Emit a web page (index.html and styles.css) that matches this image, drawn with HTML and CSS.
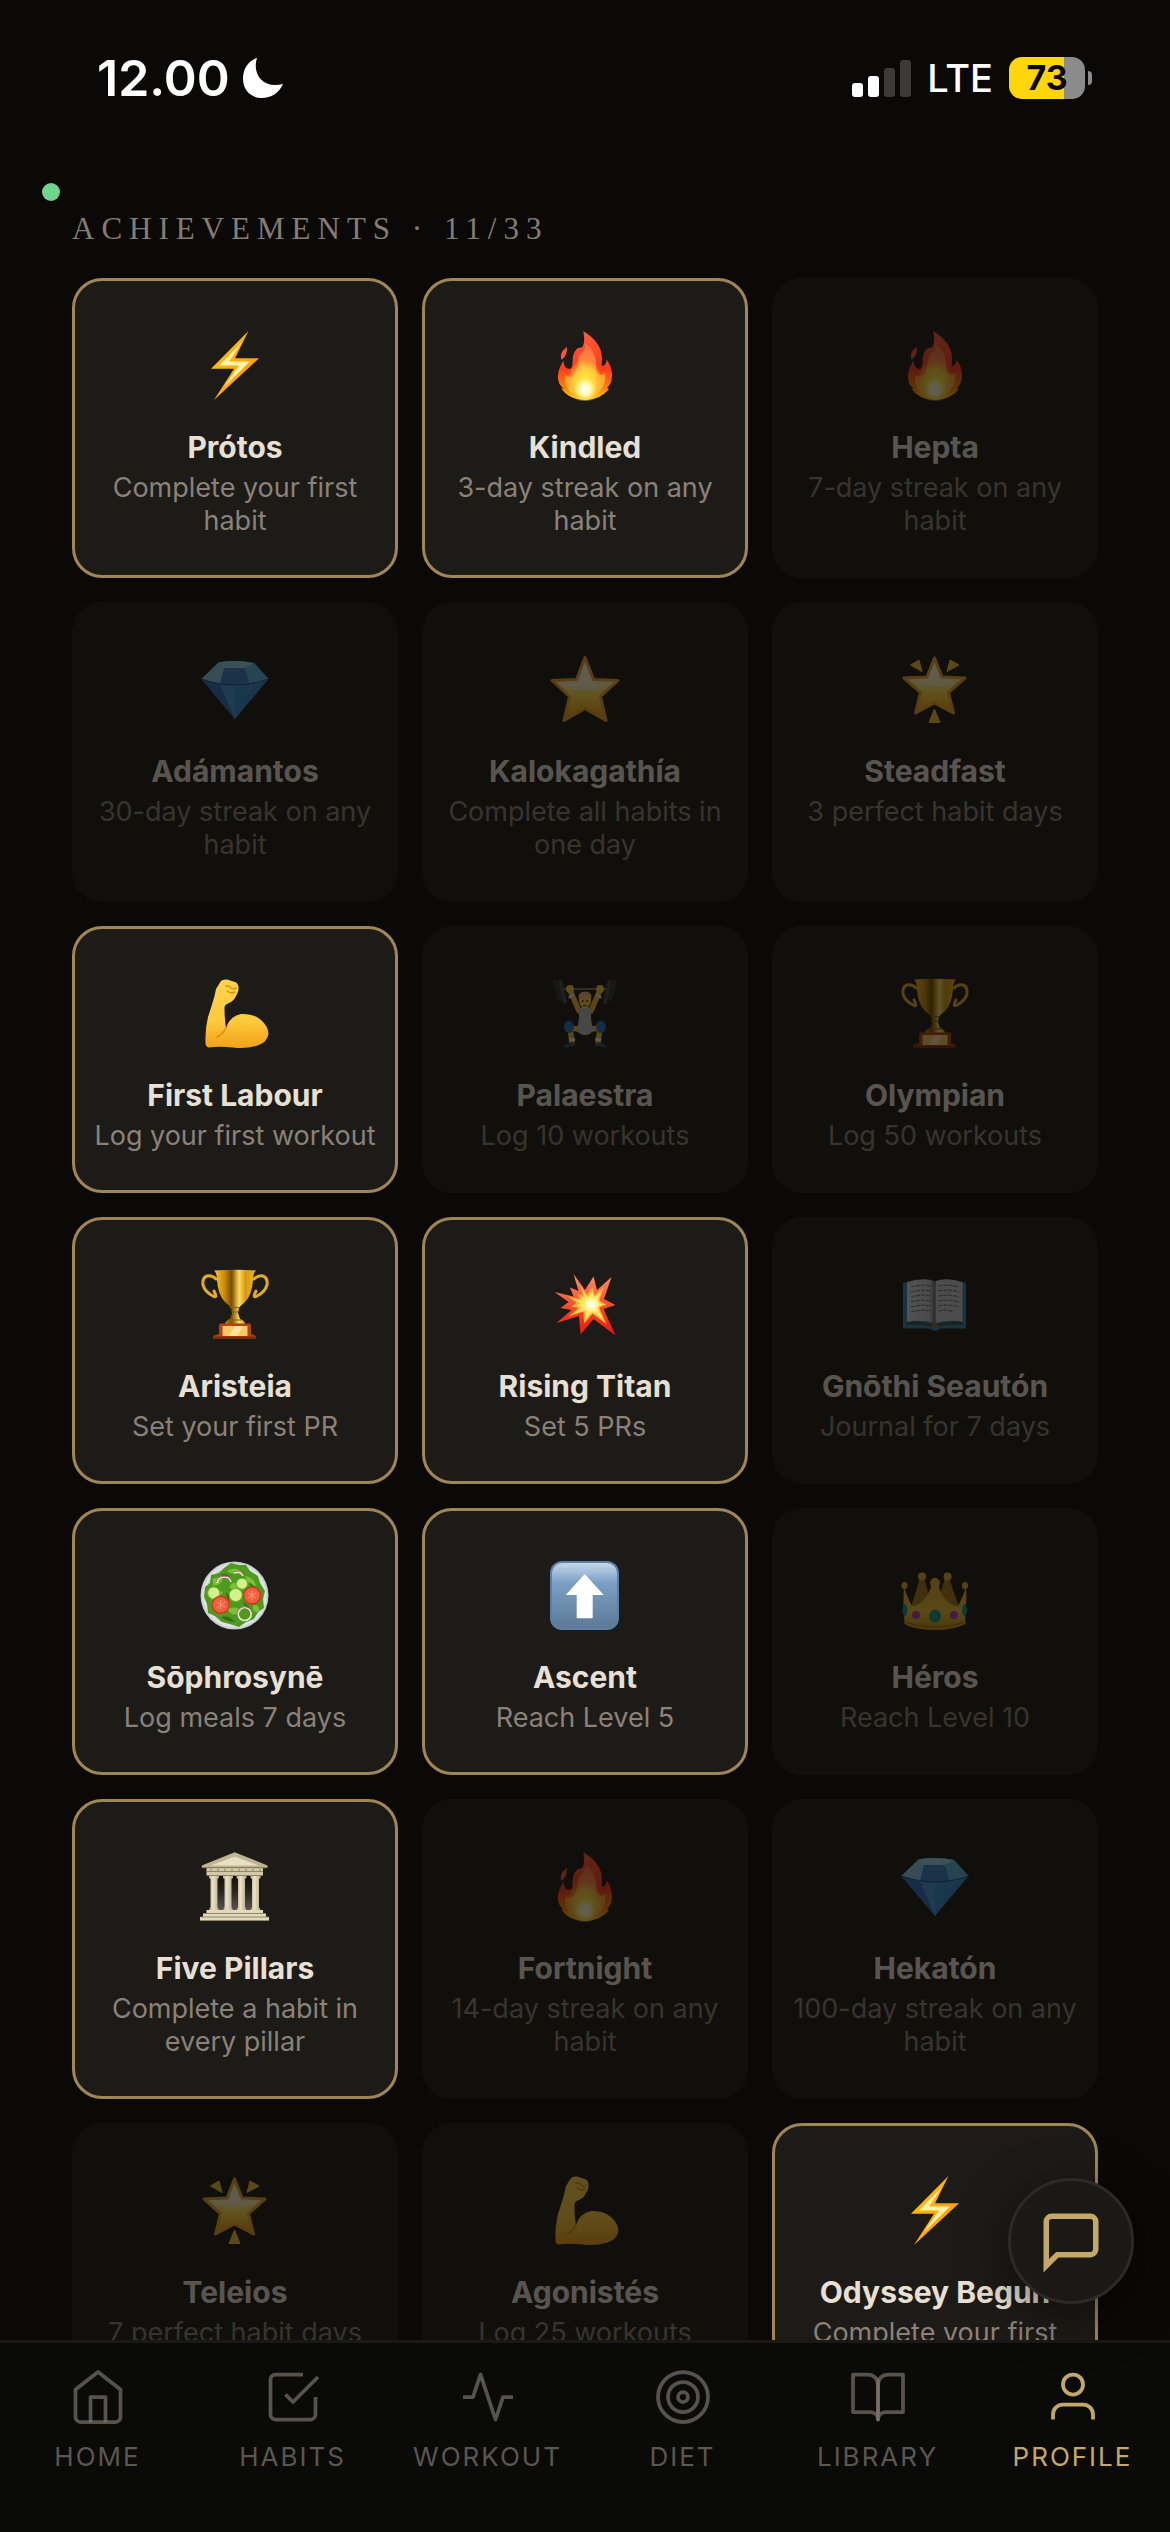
FILE: index.html
```html
<!DOCTYPE html>
<html lang="en">
<head>
  <meta charset="utf-8">
  <title>Achievements</title>
  <meta name="viewport" content="width=device-width, initial-scale=1.0">
  <link rel="stylesheet" href="styles.css">
</head>
<body>
  <!-- icon sprite -->
  <svg class="sprite" aria-hidden="true">
    <defs>
      <linearGradient id="g-bolt" x1="0" y1="0" x2="1" y2="1">
        <stop offset="0" stop-color="#ffc21a"/><stop offset="1" stop-color="#ff9500"/>
      </linearGradient>
      <linearGradient id="g-fire" x1="0" y1="0" x2="0" y2="1">
        <stop offset="0" stop-color="#ff5a3c"/><stop offset=".55" stop-color="#ff3d1c"/><stop offset=".85" stop-color="#ff8a00"/><stop offset="1" stop-color="#ffd23a"/>
      </linearGradient>
      <linearGradient id="g-flame" x1="0" y1="0" x2="0" y2="1">
        <stop offset="0" stop-color="#ff6f45"/><stop offset=".45" stop-color="#ff8f3a"/><stop offset="1" stop-color="#ffc92e"/>
      </linearGradient>
      <radialGradient id="g-glow">
        <stop offset="0" stop-color="#ffee3c"/><stop offset=".6" stop-color="#ffd83c" stop-opacity=".8"/><stop offset="1" stop-color="#ffb43c" stop-opacity="0"/>
      </radialGradient>
      <radialGradient id="g-core">
        <stop offset="0" stop-color="#ffffff"/><stop offset=".5" stop-color="#fff9b0"/><stop offset="1" stop-color="#ffe92e" stop-opacity="0"/>
      </radialGradient>
      <linearGradient id="g-gem" x1="0" y1="0" x2="1" y2="1">
        <stop offset="0" stop-color="#6fc6ea"/><stop offset="1" stop-color="#2463b8"/>
      </linearGradient>
      <linearGradient id="g-star" x1="0" y1="0" x2="0" y2="1">
        <stop offset="0" stop-color="#ffe9ae"/><stop offset=".35" stop-color="#fff3d0"/><stop offset=".6" stop-color="#ffdf48"/><stop offset="1" stop-color="#f0930c"/>
      </linearGradient>
      <linearGradient id="g-arm" x1="0" y1="0" x2="0" y2="1">
        <stop offset="0" stop-color="#ffd34d"/><stop offset=".6" stop-color="#ffca3e"/><stop offset="1" stop-color="#f2a116"/>
      </linearGradient>
      <linearGradient id="g-cup" x1="0" y1="0" x2="1" y2="0">
        <stop offset="0" stop-color="#ffc933"/><stop offset=".25" stop-color="#c98a0a"/><stop offset=".42" stop-color="#7a4c00"/><stop offset=".6" stop-color="#ffdc5c"/><stop offset=".75" stop-color="#d59a12"/><stop offset="1" stop-color="#f3b81f"/>
      </linearGradient>
      <linearGradient id="g-boom" x1="0" y1="0" x2="0" y2="1">
        <stop offset="0" stop-color="#ff8d68"/><stop offset=".4" stop-color="#fb5a3b"/><stop offset="1" stop-color="#ea120c"/>
      </linearGradient>
      <linearGradient id="g-page" x1="0" y1="0" x2="1" y2="0">
        <stop offset="0" stop-color="#dcdcde"/><stop offset=".8" stop-color="#c4c4c8"/><stop offset="1" stop-color="#77777c"/>
      </linearGradient>
      <linearGradient id="g-key" x1="0" y1="0" x2="0" y2="1">
        <stop offset="0" stop-color="#c3d6e8"/><stop offset=".12" stop-color="#a9c3dc"/><stop offset=".3" stop-color="#7b9fc4"/><stop offset="1" stop-color="#5d7a96"/>
      </linearGradient>
      <radialGradient id="g-plate">
        <stop offset=".78" stop-color="#b9c0c0"/><stop offset=".9" stop-color="#e3e7e7"/><stop offset="1" stop-color="#bcc2c3"/>
      </radialGradient>
      <linearGradient id="g-crown" x1="0" y1="0" x2="0" y2="1">
        <stop offset="0" stop-color="#dba92a"/><stop offset=".6" stop-color="#f0c236"/><stop offset="1" stop-color="#c2891a"/>
      </linearGradient>
      <linearGradient id="g-column" x1="0" y1="0" x2="1" y2="0">
        <stop offset="0" stop-color="#b8ae90"/><stop offset=".4" stop-color="#ebe3c6"/><stop offset="1" stop-color="#b3a986"/>
      </linearGradient>
      <linearGradient id="g-hall" x1="0" y1="0" x2="0" y2="1">
        <stop offset="0" stop-color="#120d04"/><stop offset=".5" stop-color="#2a2622"/><stop offset="1" stop-color="#5c5856"/>
      </linearGradient>
    </defs>

    <symbol id="bolt" viewBox="0 0 72 72">
      <path fill="url(#g-bolt)" d="M49.400 2L36 29.300H60L15 71L35 39.700H12Z"/>
      <path fill="#fff3a8" d="M43 13L30 32.500H51L25 58L40 36.500H20Z"/>
    </symbol>

    <symbol id="fire" viewBox="0 0 72 72">
      <path fill="#ff5238" d="M18 18C12 22 11 26 12.500 31C17 27 18 24 18 18Z"/>
      <path fill="url(#g-fire)" d="M34.300 2C44 8 53 17 53 29C53 33 52 36 53.500 37C56 37 57.500 34 57.500 30.500C61 35 63.500 41 63 48C62.500 53 61 56 58 59L60 60C54 67 46 71 36 71C26 71 17 67 12 59L15 60C10 56 8.500 51 9 46C9.500 40 12 36 14.500 31.500C14.500 37 17 40 21 40C26 38 21 28 27 21C29 17.500 32 20 34 17C36 12 35 7 34.300 2Z"/>
      <path fill="url(#g-flame)" d="M36 14C45 21 48 30 47 41C49 46 53 47 56 44C58 56 49 69 36 69C23 69 13 57 17 46C20 49 24 48 27 44C30 38 27 32 31 26C34 22 37 21 36 14Z"/>
      <ellipse fill="url(#g-glow)" cx="36" cy="52" rx="18" ry="22"/>
      <ellipse fill="url(#g-core)" cx="36" cy="60" rx="12" ry="13"/>
    </symbol>

    <symbol id="gem" viewBox="0 0 72 72">
      <path fill="url(#g-gem)" d="M19.500 9.500Q37 6.500 55 10L69.500 26L36 66L2.500 26Z"/>
      <path fill="#8fc9e8" d="M19.500 9.500L25 15L21 31Q10 29 2.500 26Z"/>
      <path fill="#3f7fc0" d="M25 15H46L51 32Q36 34 21 31Z"/>
      <path fill="#9ad3ee" d="M19.500 9.500Q37 6.500 55 10L46 15H25Z"/>
      <path fill="#5fb4dc" d="M55 10L69.500 26L51 32L46 15Z"/>
      <path fill="#2f6fbc" d="M2.500 26Q12 30 21 31L36 66Z"/>
      <path fill="#4a9ad6" d="M21 31Q36 34 51 32L36 66Z"/>
      <path fill="#2f8fc8" d="M36 34L51 32L36 66Z"/>
      <path fill="none" stroke="#24508f" stroke-width="1.200" d="M2.500 26Q36 38 69.500 26"/>
    </symbol>

    <symbol id="star" viewBox="0 0 72 72">
      <path fill="url(#g-star)" stroke="#e8a12a" stroke-width="3" stroke-linejoin="round" d="M36 4.500L44.500 26.500L69 27.500L51.500 43.500L57 67.500L36 55.500L15 67.500L20.500 43.500L3 27.500L27.500 26.500Z"/>
      <path fill="#fff5d8" opacity=".6" d="M36 12L42 30L58 31Q36 44 14 31L30 30Z"/>
    </symbol>

    <symbol id="glowstar" viewBox="0 0 72 72">
      <path fill="url(#g-star)" stroke="#e8a12a" stroke-width="3" stroke-linejoin="round" d="M35.500 5L43 24L66 25L49.500 39.500L54.500 60L35.500 50L16.500 60L21.500 39.500L5 25L28 24Z"/>
      <path fill="#fff5d8" opacity=".5" d="M36 12L41 27L56 28Q36 39 15 28L30 27Z"/>
      <path fill="#f3bf3a" stroke="#f3bf3a" stroke-linejoin="round" d="M11.500 12L20 7L23 18.500ZM60 12L51 7L48 18.500ZM35.500 56L41 69.500H30Z"/>
    </symbol>

    <symbol id="muscle" viewBox="0 0 72 72">
      <path fill="url(#g-arm)" d="M17 12L22 4Q24 2 28 2.500L36 5Q39 6 39.500 10Q40 15 37 19Q35 24 30 26Q25 28 25.500 31Q25.500 43 27 51Q31 39 42 37Q54 36 62 43Q69 49 69.500 57Q68 66 57 69Q46 72 34 70.500Q20 69 10 70.500Q6 70 6.500 65Q6 52 9 40Q13 28 15.500 19Z"/>
      <path fill="none" stroke="#d98d12" stroke-width="1.500" stroke-linecap="round" d="M27 51Q24 57 18 60M27 9Q30 8 32 11Q35 13 37 11M28 14Q32 17 36 15"/>
    </symbol>

    <symbol id="lifter" viewBox="0 0 72 72">
      <path fill="none" stroke="#8a8f98" stroke-width="1.500" d="M15 12H57"/>
      <path stroke="#303236" stroke-width="5" stroke-linecap="round" d="M6.500 5L11 22M65.500 5L61 22"/>
      <path stroke="#484a50" stroke-width="4" stroke-linecap="round" d="M11.500 5L16 25M60.500 5L56 25"/>
      <path fill="none" stroke="#f3b52c" stroke-width="5.500" stroke-linecap="round" stroke-linejoin="round" d="M21 13L30 34M51 13L42 34M29 52L21 51L23 66M43 52L51 51L49 66"/>
      <circle fill="#ffc93c" cx="21" cy="12" r="4"/><circle fill="#ffc93c" cx="51" cy="12" r="4"/>
      <path stroke="#e9e9ee" stroke-width="6" d="M21.500 18L23 20M50.500 18L49 20M23 61V64M49 61V64"/>
      <path fill="#b9bac0" d="M30 33L33 30H39L42 33V42L44 53Q42 58 36 58Q30 58 28 53L30 42Z"/>
      <ellipse fill="#ffc93c" cx="36" cy="23" rx="6" ry="8"/>
      <path fill="#e0b978" d="M29.500 21Q29 14.500 36 14.500Q43 14.500 42.500 21Q37 17 29.500 21Z"/>
      <path fill="#4a3410" d="M33 23h1.500v2H33ZM37.500 23H39v2H37.500ZM34 28h4v1H34Z"/>
      <ellipse fill="#2d6db8" cx="20" cy="50" rx="5" ry="6"/><ellipse fill="#2d6db8" cx="52" cy="50" rx="5" ry="6"/>
      <path fill="#2c4d78" d="M14 70Q18 65 25 65.500L26 67L19 70.500ZM58 70Q54 65 47 65.500L46 67L53 70.500Z"/>
    </symbol>

    <symbol id="trophy" viewBox="0 0 72 72">
      <path fill="none" stroke="#e3ab28" stroke-width="3" stroke-linecap="round" d="M17 11Q13 7 8 8Q3 10 4 17Q6 24 14 28Q19 31 15 23M55 11Q59 7 64 8Q69 10 68 17Q66 24 58 28Q53 31 57 23"/>
      <path fill="url(#g-cup)" d="M15 2.500Q36 1 57 2.500Q54 5 54 12Q53 27 46 34Q41 38 40 40L39 45L41 51Q46 53 46 56H26Q26 53 31 51L33 45L32 40Q31 38 26 34Q19 27 18 12Q18 5 15 2.500Z"/>
      <path fill="none" stroke="#8d5c05" stroke-width="1.200" d="M31 39.500H41M32.500 44H39.500M29 52H43"/>
      <path fill="#b0440f" d="M21 55.500H51Q52 56 52 58V66L57 68V71H14V68L20 66V58Q20 56 21 55.500Z"/>
      <path fill="#7e2a07" d="M14 68.500H57V71H14Z"/>
      <path fill="#f7c864" d="M23.500 58H48.500V68H23.500Z"/>
      <path fill="#ffe4a0" d="M36 58H44L38 68H30Z"/>
    </symbol>

    <symbol id="boom" viewBox="0 0 72 72">
      <path fill="url(#g-boom)" d="M24.500 6L36 22L44.500 8.500L48 22L62.500 9L55 31L66.500 37L54.500 41L66.500 67.500L44.500 51L31.500 66.500L30 48L7.500 55L22.500 42L11.500 40L19.500 34L5.500 24L24.500 28.500L21 19.500L29.500 23Z"/>
      <path fill="#ffb52e" transform="translate(15 13) scale(.64)" d="M24.500 6L36 22L44.500 8.500L48 22L62.500 9L55 31L66.500 37L54.500 41L66.500 67.500L44.500 51L31.500 66.500L30 48L7.500 55L22.500 42L11.500 40L19.500 34L5.500 24L24.500 28.500L21 19.500L29.500 23Z"/>
      <path fill="#ffe36a" transform="translate(22 19) scale(.48)" d="M24.500 6L36 22L44.500 8.500L48 22L62.500 9L55 31L66.500 37L54.500 41L66.500 67.500L44.500 51L31.500 66.500L30 48L7.500 55L22.500 42L11.500 40L19.500 34L5.500 24L24.500 28.500L21 19.500L29.500 23Z"/>
      <circle fill="url(#g-core)" cx="42.500" cy="36.500" r="10"/>
    </symbol>

    <symbol id="book" viewBox="0 0 72 72">
      <path fill="#2f87ad" d="M4 14.500H67V60.500H41Q36 65 31 60.500H4Z"/>
      <path fill="#4a4a4e" d="M8 52L35.500 56L63 52L65 57Q48 55 36 60Q24 55 7 57Z"/>
      <path fill="url(#g-page)" d="M8 14Q24 9 35.500 13V55Q22 51 8 54Z"/>
      <path fill="#c9c9cd" d="M63.500 14Q48 9 36.500 13V55Q50 51 63.500 54Z"/>
      <path stroke="#6c6c70" stroke-width="1" d="M35.800 13V56"/>
      <path fill="none" stroke="#77777b" stroke-width="1.200" stroke-dasharray="4 1" d="M12 19Q22 16 32 18M12 24Q22 21 32 23M12 29Q22 26 32 28M12 34Q22 31 32 33M12 39Q22 36 32 38M12 44Q22 41 32 43M39 18Q50 16 60 19M39 23Q50 21 60 24M39 28Q50 26 60 29M39 33Q50 31 60 34M39 38Q50 36 60 39M39 43Q50 41 54 44"/>
      <path fill="#8a7330" d="M32 57Q36 55 40 57L38 60H34Z"/>
    </symbol>

    <symbol id="salad" viewBox="0 0 72 72">
      <circle fill="url(#g-plate)" cx="35.500" cy="36.500" r="34"/>
      <path fill="#4d9a1f" d="M25 9L32 4L40 6L47 6L51 12L59 17L61 24L66 32L64 40L65 49L59 53L55 60L47 63L40 68L31 65L23 63L16 57L9 54L8 45L5 38L6 28L11 24L12 16L20 14Z"/>
      <path fill="#79c236" d="M28 12Q36 7 43 13Q36 18 28 12ZM46 17Q55 18 57 27Q48 26 46 17ZM12 41Q22 38 24 33Q16 30 12 41ZM28 50Q38 46 42 52Q34 60 28 50ZM30 28Q36 20 40 27Q36 34 30 28ZM54 46Q61 45 60 52Q53 55 54 46ZM14 20Q20 17 24 20Q20 28 14 26Z"/>
      <path fill="#2f7011" d="M44 43Q50 46 52 51Q46 50 44 43ZM22 58Q30 56 36 63Q28 63 22 58ZM22 16Q26 13 30 17Q26 20 22 16ZM50 23Q56 28 59 30Q52 31 50 23ZM27 33Q31 36 30 42Q27 38 27 33Z"/>
      <g fill="#d7f08e" stroke="#6fb52e">
        <circle cx="14.700" cy="34" r="6"/><circle cx="36.700" cy="36" r="6.500"/><circle cx="43" cy="24.700" r="5.500"/>
      </g>
      <g fill="#ee6040" stroke="#d8331c" stroke-width="1.500">
        <circle cx="21.700" cy="45.700" r="8.500"/><circle cx="53" cy="36.500" r="8.500"/>
      </g>
      <path fill="none" stroke="#f99a7c" stroke-width="1" d="M21.700 41V50M17.500 43L26 48M17.500 49L26 43M53 32V41M49 34L57 39M49 39L57 34"/>
      <g fill="none" stroke="#f6e6ea" stroke-width="1.500">
        <circle cx="45.700" cy="55" r="6.500"/><path d="M18 24Q19 18 25 18Q31 18 32 23M35 14Q41 11 44 17"/>
      </g>
      <path fill="none" stroke="#d0568a" stroke-width="1" d="M38 55A7.700 7.700 0 0 1 53 53M17 23Q19 17 25 17Q31 17 33 22M35 13Q42 10 45 16"/>
    </symbol>

    <symbol id="up" viewBox="0 0 72 72">
      <rect fill="#5b7fa6" x="1" y="2" width="69" height="69" rx="12"/>
      <rect fill="url(#g-key)" x="3" y="4" width="65" height="65" rx="10"/>
      <path fill="#ffffff" d="M35.700 15L54.700 36H43.700V58.500Q43.700 59.300 43 59.300H28.500Q27.700 59.300 27.700 58.500V36H16.700Z"/>
    </symbol>

    <symbol id="crown" viewBox="0 0 72 72">
      <path fill="#a8761a" d="M12 48L21 19H25L33 46L38 46L46 19H50L60 48V60H12Z"/>
      <path fill="url(#g-crown)" d="M5 28Q9 40 13 47Q19 47 23 42Q30 36 32.500 26H39.500Q42 36 48 42Q52 47 59 47Q63 40 67 28Q68 42 66 53L66.500 65Q55 71 36 71Q16 71 5.500 65L5 53Q4 42 5 28Z"/>
      <g fill="#e3b02e">
        <ellipse cx="5.500" cy="26.500" rx="3" ry="3.500"/><circle cx="23" cy="17.500" r="4"/><circle cx="36" cy="24" r="5"/><circle cx="48.500" cy="17.500" r="4"/><ellipse cx="66" cy="26.500" rx="3" ry="3.500"/>
      </g>
      <path fill="none" stroke="#9a6b12" stroke-width="1.200" d="M7 63Q20 68 36 68Q52 68 65 63"/>
      <g fill="#159a80"><ellipse cx="36" cy="57" rx="6" ry="6.500"/><ellipse cx="6" cy="51" rx="2.500" ry="6"/><ellipse cx="65.500" cy="51" rx="2.500" ry="6"/></g>
      <circle fill="#b438b0" cx="17" cy="56" r="4"/><circle fill="#b438b0" cx="55" cy="56" r="4"/>
    </symbol>

    <symbol id="pillars" viewBox="0 0 72 72">
      <rect fill="url(#g-hall)" x="14" y="24" width="44" height="37"/>
      <path fill="#bfb593" d="M35.700 2.300L68.500 15.500V17.500H2.800V15.500Z"/>
      <path fill="#e8e0c2" d="M35.700 6.500L60 15.500H11.500Z"/>
      <path fill="#d3caa9" d="M7.500 18H64V25.500H7.500Z"/>
      <path stroke="#8f8665" stroke-width="1" d="M3 17.700H68.500M8 21.500H64M9 25.500H63"/>
      <path stroke="#a89f7f" stroke-width="2" stroke-dasharray="2 5" d="M11 19.700H62"/>
      <g fill="url(#g-column)">
        <path d="M10 26H20V28L18.500 29V57L20 60H10L11.500 57V29L10 28Z"/><path d="M24 26H34V28L32.500 29V57L34 60H24L25.500 57V29L24 28Z"/><path d="M37.500 26H47.500V28L46 29V57L47.500 60H37.500L39 57V29L37.500 28Z"/><path d="M51.500 26H61.500V28L60 29V57L61.500 60H51.500L53 57V29L51.500 28Z"/>
      </g>
      <path fill="#e2dabb" d="M7.500 60H64V63.500H67V67H70V71H1V67H4V63.500H7.500Z"/>
      <path stroke="#8f8665" stroke-width="1" d="M5 63.500H66.500M2 67H69.500M1 70.500H70"/>
    </symbol>
  </svg>

  <header class="status-bar">
    <div class="status-left">
      <span class="time">12.00</span>
      <svg class="moon" viewBox="0 0 42 42"><path d="M15 1C10 16 20 32 41 27C37 36 29 41 20 41C9 41 1 33 1 22C1 12 6 4 15 1Z"/></svg>
    </div>
    <div class="status-right">
      <svg class="signal" viewBox="0 0 59 38">
        <rect x="0" y="24" width="11" height="14" rx="3"/><rect x="16" y="17" width="11" height="21" rx="3"/>
        <rect class="off" x="32" y="9" width="11" height="29" rx="3"/><rect class="off" x="48" y="1" width="11" height="37" rx="3"/>
      </svg>
      <span class="network">LTE</span>
      <div class="battery"><span class="battery-level">73</span></div>
    </div>
  </header>

  <span class="live-dot"></span>

  <main class="content">
    <h2 class="section-title">ACHIEVEMENTS · 11/33</h2>
    <ul class="grid">
      <li class="card earned"><svg class="icon"><use href="#bolt"/></svg><h3>Prótos</h3><p>Complete your first habit</p></li>
      <li class="card earned"><svg class="icon"><use href="#fire"/></svg><h3>Kindled</h3><p>3-day streak on any habit</p></li>
      <li class="card"><svg class="icon"><use href="#fire"/></svg><h3>Hepta</h3><p>7-day streak on any habit</p></li>

      <li class="card"><svg class="icon"><use href="#gem"/></svg><h3>Adámantos</h3><p>30-day streak on any habit</p></li>
      <li class="card"><svg class="icon"><use href="#star"/></svg><h3>Kalokagathía</h3><p>Complete all habits in one day</p></li>
      <li class="card"><svg class="icon"><use href="#glowstar"/></svg><h3>Steadfast</h3><p>3 perfect habit days</p></li>

      <li class="card earned"><svg class="icon"><use href="#muscle"/></svg><h3>First Labour</h3><p>Log your first workout</p></li>
      <li class="card"><svg class="icon"><use href="#lifter"/></svg><h3>Palaestra</h3><p>Log 10 workouts</p></li>
      <li class="card"><svg class="icon"><use href="#trophy"/></svg><h3>Olympian</h3><p>Log 50 workouts</p></li>

      <li class="card earned"><svg class="icon"><use href="#trophy"/></svg><h3>Aristeia</h3><p>Set your first PR</p></li>
      <li class="card earned"><svg class="icon"><use href="#boom"/></svg><h3>Rising Titan</h3><p>Set 5 PRs</p></li>
      <li class="card"><svg class="icon"><use href="#book"/></svg><h3>Gnōthi Seautón</h3><p>Journal for 7 days</p></li>

      <li class="card earned"><svg class="icon"><use href="#salad"/></svg><h3>Sōphrosynē</h3><p>Log meals 7 days</p></li>
      <li class="card earned"><svg class="icon"><use href="#up"/></svg><h3>Ascent</h3><p>Reach Level 5</p></li>
      <li class="card"><svg class="icon"><use href="#crown"/></svg><h3>Héros</h3><p>Reach Level 10</p></li>

      <li class="card earned"><svg class="icon"><use href="#pillars"/></svg><h3>Five Pillars</h3><p>Complete a habit in every pillar</p></li>
      <li class="card"><svg class="icon"><use href="#fire"/></svg><h3>Fortnight</h3><p>14-day streak on any habit</p></li>
      <li class="card"><svg class="icon"><use href="#gem"/></svg><h3>Hekatón</h3><p>100-day streak on any habit</p></li>

      <li class="card"><svg class="icon"><use href="#glowstar"/></svg><h3>Teleios</h3><p>7 perfect habit days</p></li>
      <li class="card"><svg class="icon"><use href="#muscle"/></svg><h3>Agonistés</h3><p>Log 25 workouts</p></li>
      <li class="card earned"><svg class="icon"><use href="#bolt"/></svg><h3>Odyssey Begun</h3><p>Complete your first</p></li>
    </ul>
  </main>

  <button class="chat-button" type="button" aria-label="Chat">
    <svg viewBox="0 0 24 24"><path d="M21 15a2 2 0 0 1-2 2H7l-4 4V5a2 2 0 0 1 2-2h14a2 2 0 0 1 2 2z"/></svg>
  </button>

  <nav class="tab-bar">
    <a class="tab" href="#home">
      <svg viewBox="0 0 24 24"><path d="M3 9l9-7 9 7v11a2 2 0 0 1-2 2H5a2 2 0 0 1-2-2z"/><path d="M9 22V12h6v10"/></svg>
      <span>HOME</span>
    </a>
    <a class="tab" href="#habits">
      <svg viewBox="0 0 24 24"><path d="M9 11l3 3L22 4"/><path d="M21 12v7a2 2 0 0 1-2 2H5a2 2 0 0 1-2-2V5a2 2 0 0 1 2-2h11"/></svg>
      <span>HABITS</span>
    </a>
    <a class="tab" href="#workout">
      <svg viewBox="0 0 24 24"><path d="M22 12h-4l-3 9L9 3l-3 9H2"/></svg>
      <span>WORKOUT</span>
    </a>
    <a class="tab" href="#diet">
      <svg viewBox="0 0 24 24"><circle cx="12" cy="12" r="10"/><circle cx="12" cy="12" r="6"/><circle cx="12" cy="12" r="2"/></svg>
      <span>DIET</span>
    </a>
    <a class="tab" href="#library">
      <svg viewBox="0 0 24 24"><path d="M2 3h6a4 4 0 0 1 4 4v14a3 3 0 0 0-3-3H2z"/><path d="M22 3h-6a4 4 0 0 0-4 4v14a3 3 0 0 1 3-3h7z"/></svg>
      <span>LIBRARY</span>
    </a>
    <a class="tab active" href="#profile">
      <svg viewBox="0 0 24 24"><path d="M20 21v-2a4 4 0 0 0-4-4H8a4 4 0 0 0-4 4v2"/><circle cx="12" cy="7" r="4"/></svg>
      <span>PROFILE</span>
    </a>
  </nav>
</body>
</html>
```
FILE: styles.css
```css
* {
  box-sizing: border-box;
}
body {
  margin: 0;
  height: 100vh;
  display: flex;
  flex-direction: column;
  overflow: hidden;
  background-color: #0a0907;
  color: #e8e0d4;
  font-family: Inter, 'Liberation Sans', sans-serif;
}
.sprite {
  position: absolute;
  width: 0;
  height: 0;
}

/* status bar */
.status-bar {
  display: flex;
  justify-content: space-between;
  padding: 48px 78px 20px 97px;
  color: #ffffff;
}
.status-left, .status-right {
  display: flex;
  align-items: center;
  height: 60px;
}
.status-left {
  gap: 12px;
}
.status-right {
  gap: 16px;
}
.time {
  font-size: 50px;
  font-weight: 600;
  line-height: 60px;
}
.moon {
  width: 42px;
  height: 42px;
  fill: #ffffff;
}
.signal {
  width: 59px;
  height: 38px;
  fill: #ffffff;
}
.signal .off {
  fill: #3b3a39;
}
.network {
  font-size: 38px;
  font-weight: 500;
  line-height: 60px;
}
.battery {
  position: relative;
  width: 76px;
  height: 42px;
  margin-right: 7px;
  border-radius: 13px;
  background: linear-gradient(to right, #ffd60a 73%, #8b8b8b 73%);
  color: #0a0907;
  text-align: center;
}
.battery::after {
  content: "";
  position: absolute;
  left: 79px;
  top: 14px;
  width: 4px;
  height: 14px;
  border-radius: 0 4px 4px 0;
  background: #8b8b8b;
}
.battery-level {
  font-size: 34px;
  font-weight: 700;
  line-height: 42px;
}

.live-dot {
  position: fixed;
  top: 183px;
  left: 42px;
  width: 18px;
  height: 18px;
  border-radius: 50%;
  background-color: #70d58e;
}

/* achievements */
.content {
  flex: 1;
  min-height: 0;
  overflow: hidden;
  padding: 83px 72px 0;
}
.section-title {
  margin: 0 0 31px;
  font-family: 'Liberation Serif', serif;
  font-size: 31px;
  font-weight: 400;
  line-height: 36px;
  letter-spacing: 7px;
  color: #847d73;
}
.grid {
  display: grid;
  grid-template-columns: repeat(3, minmax(0, 1fr));
  gap: 24px;
  margin: 0;
  padding: 0;
  list-style: none;
}
.card {
  display: flex;
  flex-direction: column;
  align-items: center;
  padding: 48px 12px 38px;
  border: 3px solid #1c1b17;
  border-radius: 30px;
  background-color: #1c1b17;
  text-align: center;
  opacity: 0.35;
}
.card.earned {
  border-color: #a08555;
  opacity: 1;
}
.icon {
  width: 72px;
  height: 72px;
  margin-bottom: 28px;
}
.card h3 {
  margin: 0 0 6px;
  font-size: 30px;
  font-weight: 700;
  line-height: 36px;
}
.card p {
  margin: 0;
  font-size: 27px;
  line-height: 33px;
  color: #8a8279;
}

/* floating chat button */
.chat-button {
  position: fixed;
  right: 36px;
  bottom: 228px;
  display: flex;
  align-items: center;
  justify-content: center;
  width: 126px;
  height: 126px;
  padding: 0;
  border: 3px solid #2c2a27;
  border-radius: 50%;
  background-color: #1a1916;
  box-shadow: 0 12px 48px rgba(0, 0, 0, 0.5);
}
.chat-button svg {
  width: 66px;
  height: 66px;
  fill: none;
  stroke: #c4a868;
  stroke-width: 2;
}

/* bottom tabs */
.tab-bar {
  display: grid;
  grid-template-columns: repeat(6, 1fr);
  padding: 24px 0 59px;
  border-top: 3px solid #1a1917;
  background-color: #0a0a08;
}
.tab {
  display: flex;
  flex-direction: column;
  align-items: center;
  gap: 14px;
  color: #5a5650;
  text-decoration: none;
}
.tab svg {
  width: 60px;
  height: 60px;
  fill: none;
  stroke: rgba(138, 130, 121, 0.6);
  stroke-width: 1.5px;
  stroke-linejoin: round;
}
.tab span {
  font-size: 26px;
  line-height: 32px;
  letter-spacing: 2px;
}
.tab.active {
  color: #c4a868;
}
.tab.active svg {
  stroke: #c4a868;
}
```
